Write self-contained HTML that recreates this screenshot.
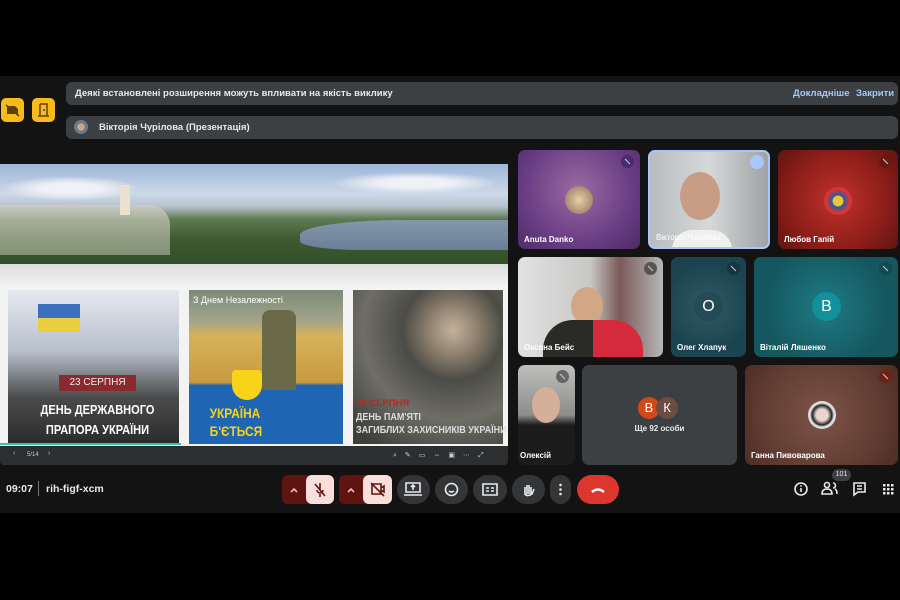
<!DOCTYPE html>
<html><head><meta charset="utf-8">
<style>
*{margin:0;padding:0;box-sizing:border-box}
body{width:900px;height:600px;background:#000;font-family:"Liberation Sans","DejaVu Sans",sans-serif;position:relative;overflow:hidden;color:#e8eaed}
.abs{position:absolute}
#app{left:0;top:76px;width:900px;height:437px;background:#131314}
.ban{background:#3c4043;border-radius:6px;left:66px;width:832px;height:23px;font-size:9.5px;font-weight:bold;color:#e8eaed}
.yb{background:#f9bb1a;border-radius:5px;top:98px;width:23px;height:24px}
.tile{border-radius:7px;overflow:hidden}
.nm{position:absolute;left:6px;bottom:5px;font-size:8px;font-weight:bold;color:#fff}
.mic{position:absolute;right:6px;top:5px;width:13px;height:13px;border-radius:50%;background:rgba(0,0,0,.35)}
.mic:after{content:"";position:absolute;left:3px;top:6px;width:7px;height:1px;background:#ccc;transform:rotate(45deg)}
.av{position:absolute;border-radius:50%;color:#fff;font-size:16px;text-align:center}
.btn{position:absolute;top:475px;height:29px;border-radius:15px;background:#333537}
.cap{font-family:"Liberation Sans",sans-serif;font-weight:bold;position:absolute;text-align:center}
</style></head><body>
<div id="app" class="abs"></div>
<div class="abs yb" style="left:1px"><svg width="23" height="24"><path d="M6 8h8l3 3v5H6z" fill="#5a4300"/><path d="M5 7l13 11" stroke="#5a4300" stroke-width="1.5"/></svg></div>
<div class="abs yb" style="left:32px"><svg width="23" height="24"><path d="M8 6h7v12M8 6v12M6 18h11M12 11v2" stroke="#5a4300" stroke-width="1.5" fill="none"/></svg></div>
<div class="abs ban" style="top:82px"><span class="abs" style="left:9px;top:6px">Деякі встановлені розширення можуть впливати на якість виклику</span><span class="abs" style="left:727px;top:6px;color:#a8c7fa">Докладніше</span><span class="abs" style="left:790px;top:6px;color:#a8c7fa">Закрити</span></div>
<div class="abs ban" style="top:116px"><span class="abs" style="left:8px;top:4px;width:14px;height:14px;border-radius:50%;background:radial-gradient(#c9a58a 35%,#6b7a88 40%)"></span><span class="abs" style="left:33px;top:6px">Вікторія Чурілова (Презентація)</span></div>

<!-- presentation -->
<div class="abs" style="left:0;top:164px;width:508px;height:282px;background:#f3f3f3"></div>
<div class="abs" style="left:0;top:164px;width:508px;height:100px;background:linear-gradient(180deg,#9db5d8 0%,#cdd8e8 30%,#b8c4cf 42%,#5f7a52 55%,#3f5a30 75%,#33502b 100%)"></div>
<div class="abs" style="left:0;top:176px;width:140px;height:25px;background:radial-gradient(ellipse,#eef1f5 30%,transparent 70%)"></div>
<div class="abs" style="left:330px;top:172px;width:170px;height:22px;background:radial-gradient(ellipse,#eef1f5 30%,transparent 70%)"></div>
<div class="abs" style="left:300px;top:220px;width:208px;height:30px;background:linear-gradient(180deg,#8497ab,#6a7f97);border-radius:50% 0 0 30%"></div>
<div class="abs" style="left:0;top:205px;width:170px;height:50px;background:linear-gradient(180deg,#cfcdc0,#9aa58c);opacity:.75;border-radius:0 20px 0 0"></div>
<div class="abs" style="left:120px;top:185px;width:10px;height:30px;background:#e8e2cf"></div>
<div class="abs" style="left:0;top:264px;width:508px;height:26px;background:linear-gradient(#ddd,#f5f5f5)"></div>
<div class="abs" style="left:8px;top:290px;width:171px;height:154px;background:linear-gradient(180deg,#e6e8ef 0%,#b7bfcc 40%,#4a4b4a 70%,#2b2b2b 100%)"></div>
<div class="abs" style="left:38px;top:304px;width:42px;height:14px;background:#3d6fbf"></div><div class="abs" style="left:38px;top:318px;width:42px;height:14px;background:#e9cf3f"></div>
<div class="abs" style="left:59px;top:375px;width:77px;height:16px;background:#8a2a2f"></div>
<div class="cap" style="left:59px;top:377px;width:77px;font-size:10px;color:#eee;font-weight:normal">23 СЕРПНЯ</div>
<div class="cap" style="left:20px;top:400px;width:155px;font-size:13px;color:#fff;line-height:20px;transform:scaleX(.85)">ДЕНЬ ДЕРЖАВНОГО<br>ПРАПОРА УКРАЇНИ</div>
<div class="abs" style="left:189px;top:290px;width:154px;height:154px;background:linear-gradient(180deg,#7c8a78 0%,#a2a48a 20%,#d6b25a 30%,#c99a3f 60%,#1e66b3 62%,#1e66b3 100%)"></div>
<div class="abs" style="left:262px;top:310px;width:34px;height:80px;background:#6a6a48;border-radius:8px 8px 2px 2px"></div>
<div class="cap" style="left:193px;top:295px;font-size:9px;color:#fff;font-weight:normal">З Днем Незалежності</div>
<div class="abs" style="left:232px;top:370px;width:30px;height:30px;background:#f8d31a;border-radius:4px 4px 15px 15px"></div>
<div class="cap" style="left:205px;top:404px;font-size:14px;color:#f8d31a;text-align:left;line-height:18px;transform:scaleX(.85)">УКРАЇНА<br>Б'ЄТЬСЯ</div>
<div class="abs" style="left:353px;top:290px;width:150px;height:154px;background:radial-gradient(circle at 100px 40px,#c4b39a 0,#8d806e 25px,#4c4c46 50px,#6e6e66 90px,#3e3e3a 140px)"></div>
<div class="cap" style="left:356px;top:398px;font-size:9.5px;color:#b02a2a;text-align:left">29 СЕРПНЯ</div>
<div class="cap" style="left:356px;top:411px;font-size:10px;color:#ddd;text-align:left;line-height:13px;transform-origin:left;transform:scaleX(.9)">ДЕНЬ ПАМ'ЯТІ<br>ЗАГИБЛИХ ЗАХИСНИКІВ УКРАЇНИ</div>
<div class="abs" style="left:0;top:443px;width:181px;height:2px;background:#38c0b4"></div>
<div class="abs" style="left:0;top:446px;width:508px;height:19px;background:#2d2e30;border-radius:0 0 4px 4px;font-size:7px;color:#ccc"><span class="abs" style="left:13px;top:4px">‹</span><span class="abs" style="left:27px;top:6px;font-size:6px">5/14</span><span class="abs" style="left:48px;top:4px">›</span><span class="abs" style="left:393px;top:5px;letter-spacing:8px">⌕✎▭⇔▣⋯⤢</span></div>

<!-- tiles -->
<div class="abs tile" style="left:518px;top:150px;width:122px;height:99px;background:radial-gradient(circle at 60px 40px,#9a6aa0,#6b3f86 60%,#4d2a66)"><div class="av" style="left:47px;top:36px;width:28px;height:28px;background:radial-gradient(#e9cfa8,#8a6e5b)"></div><div class="mic" style="background:#4a2a70"></div><div class="nm">Anuta Danko</div></div>
<div class="abs tile" style="left:648px;top:150px;width:122px;height:99px;background:linear-gradient(90deg,#b9bcbe,#d6d8d9 50%,#9fa2a4);border:2px solid #a8c7fa"><div class="abs" style="left:30px;top:20px;width:40px;height:48px;border-radius:50%;background:#c89d86"></div><div class="abs" style="left:22px;top:78px;width:60px;height:25px;border-radius:20px 20px 0 0;background:#efefef"></div><div class="abs" style="right:4px;top:3px;width:14px;height:14px;border-radius:50%;background:#a8c7fa"></div><div class="nm" style="font-weight:normal">Вікторія Чурілова</div></div>
<div class="abs tile" style="left:778px;top:150px;width:120px;height:99px;background:radial-gradient(circle at 60px 50px,#c0322a,#8e1e1a 60%,#5e1512)"><div class="av" style="left:46px;top:37px;width:28px;height:28px;background:radial-gradient(#f0c534 25%,#1d5fab 30%,#d33 60%)"></div><div class="mic" style="background:#6a1714"></div><div class="nm">Любов Гапій</div></div>
<div class="abs tile" style="left:518px;top:257px;width:145px;height:100px;background:linear-gradient(90deg,#e2e2e2,#c7c7c5 50%,#7b5a58 70%,#b7b7b7)"><div class="abs" style="left:53px;top:30px;width:32px;height:38px;border-radius:50%;background:#d2a785"></div><div class="abs" style="left:25px;top:63px;width:100px;height:40px;border-radius:30px 30px 0 0;background:linear-gradient(90deg,#2a2a26 50%,#d42a3c 50%)"></div><div class="mic" style="background:#555"></div><div class="nm">Оксана Бейс</div></div>
<div class="abs tile" style="left:671px;top:257px;width:75px;height:100px;background:radial-gradient(circle at 37px 50px,#2f5a66,#1c4350 70%)"><div class="av" style="left:23px;top:35px;width:29px;height:29px;line-height:29px;background:#234a55">O</div><div class="mic" style="background:#173540"></div><div class="nm">Олег Хлапук</div></div>
<div class="abs tile" style="left:754px;top:257px;width:144px;height:100px;background:radial-gradient(circle at 72px 50px,#1e7b85,#15575f 70%)"><div class="av" style="left:58px;top:35px;width:29px;height:29px;line-height:29px;background:#12909b">В</div><div class="mic" style="background:#124a52"></div><div class="nm">Віталій Ляшенко</div></div>
<div class="abs tile" style="left:518px;top:365px;width:57px;height:100px;background:linear-gradient(#bfbfbd,#8d8d8a 50%,#1c1c1c 60%)"><div class="abs" style="left:14px;top:22px;width:28px;height:36px;border-radius:50%;background:#d4b09a"></div><div class="mic" style="background:#666"></div><div class="nm" style="left:2px">Олексій</div></div>
<div class="abs tile" style="left:582px;top:365px;width:155px;height:100px;background:#3c4043"><div class="av" style="left:56px;top:32px;width:22px;height:22px;line-height:22px;font-size:13px;background:#d04a18">В</div><div class="av" style="left:74px;top:32px;width:22px;height:22px;line-height:22px;font-size:13px;background:#6d4c41">К</div><div class="abs" style="left:0;width:155px;top:59px;text-align:center;font-size:8px;font-weight:bold">Ще 92 особи</div></div>
<div class="abs tile" style="left:745px;top:365px;width:153px;height:100px;background:radial-gradient(circle at 76px 50px,#7e5448,#5e3a30 70%,#4b2c24)"><div class="av" style="left:63px;top:36px;width:28px;height:28px;background:radial-gradient(#e8d5cc 30%,#222 50%,#ddd 60%)"></div><div class="mic" style="background:#6d2219"></div><div class="nm">Ганна Пивоварова</div></div>

<!-- bottom bar -->
<div class="abs" style="left:6px;top:483px;font-size:10.5px;font-weight:bold">09:07</div>
<div class="abs" style="left:38px;top:481px;width:1px;height:15px;background:#777"></div>
<div class="abs" style="left:46px;top:483px;font-size:10.5px;font-weight:bold">rih-figf-xcm</div>
<div class="btn" style="left:282px;width:52px;background:#601410;border-radius:6px"></div>
<div class="btn" style="left:306px;width:28px;background:#f9dedc;border-radius:6px"></div>
<div class="btn" style="left:339px;width:53px;background:#601410;border-radius:6px"></div>
<div class="btn" style="left:363px;width:29px;background:#f9dedc;border-radius:6px"></div>
<div class="btn" style="left:397px;width:33px"></div>
<div class="btn" style="left:435px;width:33px"></div>
<div class="btn" style="left:473px;width:34px"></div>
<div class="btn" style="left:512px;width:33px"></div>
<div class="btn" style="left:550px;width:21px"></div>
<div class="btn" style="left:577px;width:42px;background:#dc362e"></div>
<svg class="abs" style="left:0;top:0" width="900" height="600" fill="none" stroke="#e8eaed" stroke-width="1.6">
<path d="M291 492l3-3 3 3M348 492l3-3 3 3" stroke="#f2b8b5"/>
<path d="M320 483v7M317 490a3 3 0 0 0 6 0M320 494v3M315 484l10 12" stroke="#601410"/>
<path d="M372 484h9v10h-9zM381 488l3-2v6l-3-2M371 483l13 13" stroke="#601410"/>
<path d="M592 492q6-5 12 0" stroke="#fff" stroke-width="2.5"/>
<path d="M406 483h14v9h-14zM404 495h18M413 490v-5M411 487l2-2 2 2"/>
<circle cx="451.5" cy="489.5" r="6"/><path d="M449 491q2.5 2 5 0"/>
<path d="M483 484h14v11h-14zM486 488h3M486 491h3M491 488h3M491 491h3"/>
<path d="M525 495v-8M527 494v-9M529 494v-9M531 494v-7M525 494q2 3 7 0l2-5"/>
<circle cx="801" cy="489" r="6"/><path d="M801 488v4"/>
<circle cx="827" cy="485" r="2.5"/><path d="M822 494q0-5 5-5t5 5zM833 483a2.5 2.5 0 0 1 0 5M835 489q2 1 2 5"/>
<path d="M854 483h11v9h-7l-4 3z"/><path d="M857 486h5M857 489h5"/>
<g fill="#e8eaed" stroke="none">
<circle cx="560.5" cy="485" r="1.3"/><circle cx="560.5" cy="489.5" r="1.3"/><circle cx="560.5" cy="494" r="1.3"/>
<circle cx="801" cy="486" r=".9"/>
<rect x="883" y="484" width="2.5" height="2.5"/><rect x="887" y="484" width="2.5" height="2.5"/><rect x="891" y="484" width="2.5" height="2.5"/>
<rect x="883" y="488" width="2.5" height="2.5"/><rect x="887" y="488" width="2.5" height="2.5"/><rect x="891" y="488" width="2.5" height="2.5"/>
<rect x="883" y="492" width="2.5" height="2.5"/><rect x="887" y="492" width="2.5" height="2.5"/><rect x="891" y="492" width="2.5" height="2.5"/>
</g>
</svg>
<div class="abs" style="left:832px;top:469px;width:19px;height:12px;border-radius:6px;background:#3c4043;font-size:7px;text-align:center;line-height:12px">101</div>
</body></html>
